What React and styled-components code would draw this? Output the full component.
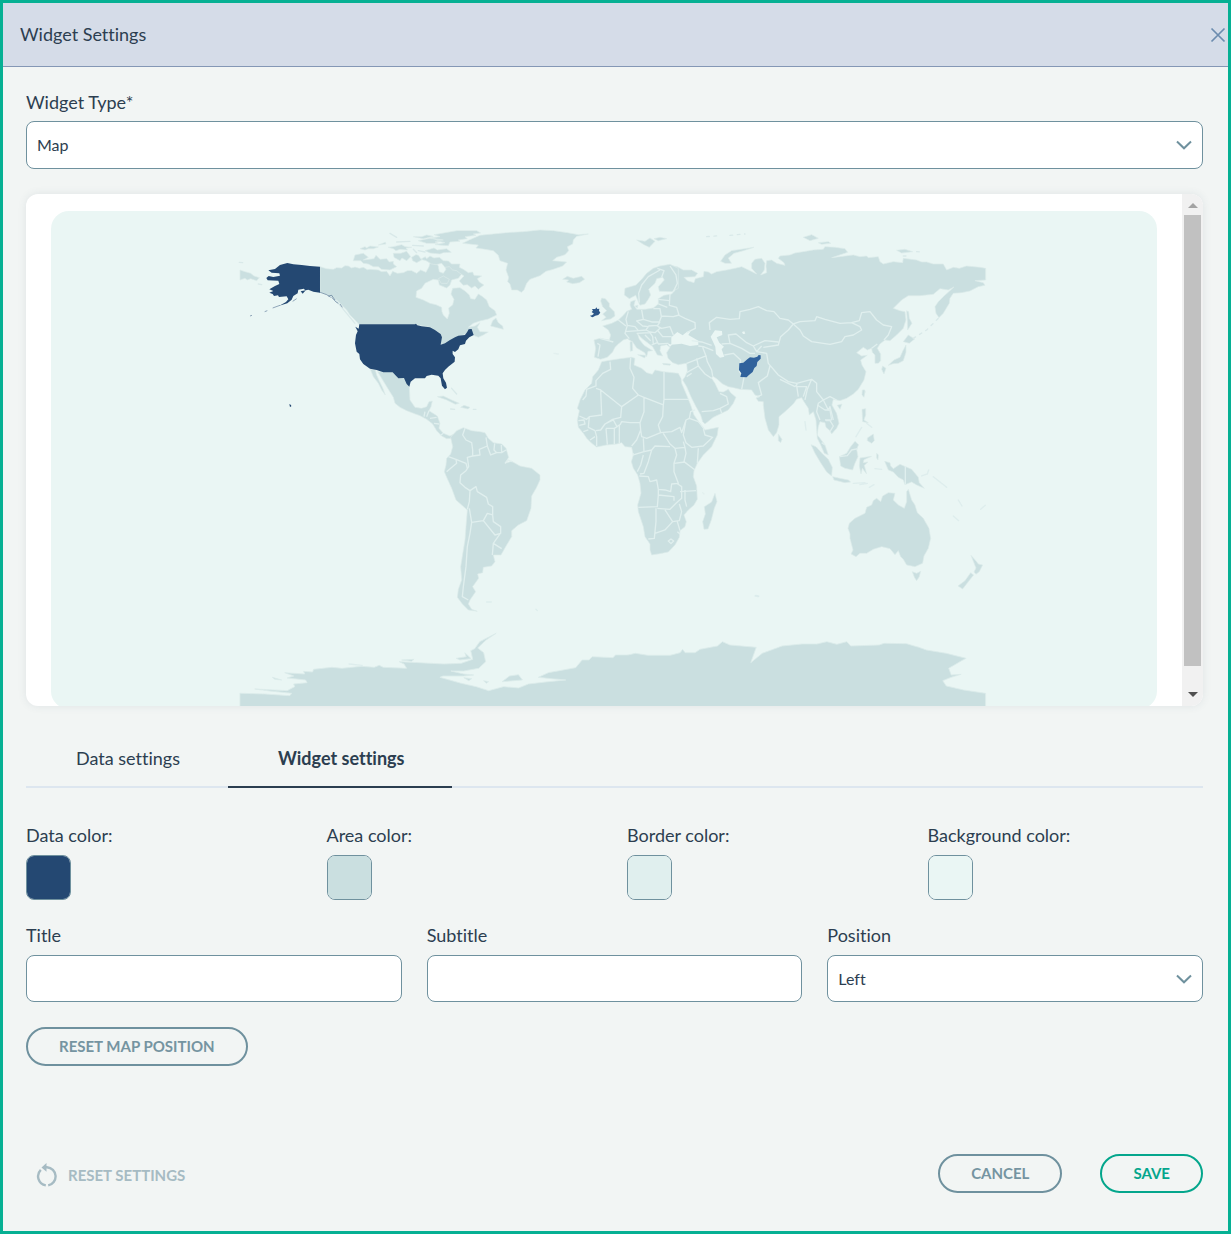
import React, { useState } from 'react';
import styled, { createGlobalStyle } from 'styled-components';

const GlobalStyle = createGlobalStyle`
  * {
    box-sizing: border-box;
  }

  body {
    margin: 0;
    font-family: Lato, "Open Sans", sans-serif;
    font-size: 18px;
    font-variant-ligatures: none;
    line-height: 24px;
    color: #2c3e50;
  }

  button, input, select {
    font-family: inherit;
    font-variant-ligatures: inherit;
    color: inherit;
  }
`;

const Dialog = styled.section`
  display: flex;
  flex-direction: column;
  min-height: 100vh;
  border: 3px solid #06b093;
  background: #f2f5f4;
`;

const Header = styled.header`
  display: flex;
  align-items: center;
  justify-content: space-between;
  height: 64px;
  padding: 0 2px 0 17px;
  background: #d5dce8;
  border-bottom: 1px solid #8497b5;
`;

const Heading = styled.h1`
  margin: 0;
  padding-bottom: 2px;
  font-size: 18px;
  font-weight: 400;
`;

const CloseButton = styled.button`
  display: flex;
  padding: 0;
  border: none;
  background: none;
  color: #6c8cae;
  cursor: pointer;
`;

const Body = styled.form`
  display: flex;
  flex: 1;
  flex-direction: column;
  padding: 24px 25px 38px 23px;
`;

const Field = styled.div`
  display: flex;
  flex-direction: column;
  gap: ${props => props.$gap || 8}px;
`;

const Label = styled.label`
  display: block;
  line-height: 22px;
`;

const TextInput = styled.input`
  width: 100%;
  height: 47px;
  padding: 0 10px;
  border: 1px solid #6f919e;
  border-radius: 8px;
  background: #fff;
  font-size: 16px;
`;

const SelectWrap = styled.div`
  position: relative;
`;

const SelectBox = styled.select`
  display: block;
  width: 100%;
  height: ${props => props.$height}px;
  padding: 0 40px 1px 10px;
  border: 1px solid #6f919e;
  border-radius: 8px;
  background: #fff;
  font-size: 16px;
  appearance: none;
`;

const Chevron = styled.svg`
  position: absolute;
  top: 50%;
  right: 11px;
  margin-top: -5px;
  pointer-events: none;
`;

const Preview = styled.div`
  display: flex;
  height: 512px;
  margin: 25px 0;
  border-radius: 12px;
  background: #fff;
  box-shadow: 0 0 8px rgba(60, 80, 100, 0.1);
  overflow: hidden;
`;

const PreviewContent = styled.div`
  flex: 1;
  min-width: 0;
  padding: 17px 25px 0;
  overflow: hidden;
`;

const MapPanel = styled.div`
  height: 498px;
  border-radius: 18px;
  background: #eaf6f4;
  overflow: hidden;
`;

const MapSvg = styled.svg`
  display: block;
  width: 100%;
  height: 498px;
`;

const ScrollTrack = styled.div`
  display: flex;
  flex-direction: column;
  align-items: center;
  width: 21px;
  background: #f1f1f1;
`;

const ScrollArrow = styled.div`
  width: 0;
  height: 0;
  margin: ${props => (props.$down ? '26px 0 0' : '9px 0 7px')};
  border-left: 5px solid transparent;
  border-right: 5px solid transparent;
  border-${props => (props.$down ? 'top' : 'bottom')}: 5px solid ${props => (props.$down ? '#505050' : '#a3a3a3')};
`;

const ScrollThumb = styled.div`
  width: 17px;
  height: 451px;
  background: #c1c1c1;
`;

const Tabs = styled.div`
  display: flex;
  height: 57px;
  border-bottom: 2px solid #dde6ef;
`;

const Tab = styled.button`
  height: 57px;
  padding: 0 48px 2px 50px;
  border: none;
  border-bottom: 2px solid ${props => (props.$active ? '#2c3e50' : 'transparent')};
  background: none;
  font-size: 18px;
  font-weight: ${props => (props.$active ? 700 : 400)};
  cursor: pointer;
`;

const Columns = styled.div`
  display: grid;
  grid-template-columns: repeat(${props => props.$count}, 1fr);
  column-gap: 25px;
  margin-top: ${props => props.$top}px;
`;

const Swatch = styled.input`
  width: 45px;
  height: 45px;
  padding: 0;
  border: 1px solid #6f919e;
  border-radius: 8px;
  background: none;
  overflow: hidden;
  cursor: pointer;

  &::-webkit-color-swatch-wrapper {
    padding: 0;
  }

  &::-webkit-color-swatch {
    border: none;
  }
`;

const PillButton = styled.button`
  align-self: flex-start;
  height: 39px;
  padding: 0 31px 2px;
  border: 2px solid ${props => (props.$primary ? '#04a68c' : '#6f919e')};
  border-radius: 20px;
  background: none;
  color: ${props => (props.$primary ? '#04a68c' : '#7594a1')};
  font-size: 15px;
  font-weight: 700;
  cursor: pointer;
`;

const Footer = styled.footer`
  display: flex;
  align-items: center;
  gap: 38px;
  margin-top: auto;
`;

const ResetButton = styled.button`
  display: flex;
  align-items: center;
  gap: 10px;
  margin-right: auto;
  padding: 2px 0 0 10px;
  border: none;
  background: none;
  color: #a6bbc3;
  font-size: 15px;
  font-weight: 700;
  cursor: pointer;
`;

const Land = styled.path`
  fill: #cadfe0;
  stroke: #dcecea;
  stroke-width: 2;
`;

const Islands = styled.path`
  fill: none;
  stroke: #d9e9e9;
  stroke-width: 4;
  stroke-linecap: round;
`;

const Borders = styled.path`
  fill: none;
  stroke: #e0efee;
  stroke-width: 4;
  stroke-linejoin: round;
`;

const Water = styled.path`
  fill: #eaf6f4;
`;

const Data = styled.path`
  fill: ${props => props.$color || '#244872'};
`;

const DataLine = styled.path`
  fill: none;
  stroke: #244872;
  stroke-width: 2;
  opacity: 0.7;
`;

const WorldMap = () => (
  <MapSvg viewBox="51 211 1106 498" preserveAspectRatio="xMidYMin meet" role="img" aria-label="World map">
    <g transform="translate(230 220) scale(0.3333)">
      <Land d="M270 140 290 146 310 148 320 143 335 144 345 137 355 138 365 144 375 141 388 145 400 142 412 149 420 148 445 150 455 155 470 154 480 168 488 154 502 160 520 158 532 152 545 152 560 160 572 150 588 157 597 140 603 118 615 122 625 138 628 155 640 160 648 148 643 138 660 136 672 145 688 148 697 160 685 175 665 180 660 195 650 204 628 195 625 180 610 178 585 190 575 205 560 213 558 232 580 240 600 250 618 254 635 262 636 275 640 285 652 297 658 280 656 264 668 255 672 238 663 222 668 205 690 203 705 213 718 225 722 236 735 238 745 222 755 228 770 240 778 260 795 272 800 285 775 297 750 303 730 310 715 322 735 318 750 308 742 322 750 335 775 336 760 345 745 352 728 345 720 335 660 365 632 375 630 340 600 322 558 314 388 314 375 300 360 285 350 270 335 255 320 240 300 228 270 216Z" />
      <Land d="M443 455 488 455 505 473 520 470 538 498 540 540 555 562 575 565 590 560 597 545 607 543 603 560 597 572 622 588 630 610 627 625 640 640 660 648 678 640 672 655 650 656 635 648 620 632 608 612 590 598 570 587 550 580 530 572 510 562 495 550 490 532 475 508 458 480Z" />
      <Land d="M421 448 430 470 445 490 455 510 466 525 458 503 448 483 440 465 436 450Z" />
      <Land d="M30 150 45 155 62 160 72 168 88 173 80 182 62 176 52 180 45 175 30 180Z" />
      <Land d="M375 105 400 100 415 112 400 120 432 116 438 106 450 118 470 116 478 126 490 124 490 132 500 140 480 150 455 148 445 140 430 140 415 132 400 130 392 122 370 122Z" />
      <Land d="M572 118 586 110 590 116 600 108 612 114 628 112 640 122 655 123 665 132 690 132 688 142 700 148 715 158 728 156 732 166 755 168 742 176 748 186 762 195 745 208 735 198 725 204 712 194 700 196 688 183 702 168 690 160 680 152 668 150 658 140 645 142 635 130 618 134 605 132 588 122Z" />
      <Land d="M490 100 512 100 530 94 542 110 530 122 516 114 510 122 492 112Z M545 112 558 104 565 106 575 120 560 128 548 122Z M390 86 405 80 410 84 420 78 445 81 430 86 415 86 405 90Z M445 75 466 67 468 72Z M475 82 490 80 515 74 525 80 545 82 528 84 532 90 510 88 498 92 490 86Z M565 62 600 55 640 62 615 66 625 70 590 70Z" />
      <Land d="M612 44 680 32 740 32 752 39 730 42 738 46 705 50 712 56 685 60 690 64 660 66 655 77 615 74 645 68 620 62 640 60 600 54 630 50Z M585 92 612 84 622 90 650 86 664 97 640 98 630 102 600 99Z M550 50 575 50 590 45 610 49 590 54 580 56Z" />
      <Land d="M625 176 640 168 658 178 652 190 634 190Z M782 318 788 302 798 294 805 308 818 318 820 328 805 324Z M622 530 640 528 665 540 688 550 676 553 650 540Z M692 562 702 556 720 562 714 567Z" />
      <Islands d="M28 127 38 128 M85 192 95 194 M662 567 674 568 M730 568 738 568 M665 505 680 522 M310 232 375 310 M480 40 500 52 M500 66 540 64 M548 76 580 78 M565 92 585 96 M550 88 560 98" />
      <Borders d="M585 575 582 590 M597 572 590 590 M600 595 620 592 M628 612 612 610 M640 640 632 646" />
      <Data d="M388 313 555 313 558 311 562 316 575 319 600 322 615 330 632 342 636 352 632 374 645 370 660 360 675 352 685 347 705 345 712 335 716 328 725 327 731 345 718 352 708 362 705 372 690 376 685 388 675 396 668 392 668 402 675 412 674 425 655 440 645 450 638 460 640 475 648 488 651 503 645 508 636 497 632 475 625 467 605 464 590 468 585 475 555 475 542 485 538 500 530 492 522 474 505 475 488 457 460 457 440 450 420 446 400 432 390 418 388 402 380 395 375 370 378 345 383 334 376 320 386 326Z" />
      <Data d="M270 140 240 138 215 135 190 133 172 129 150 135 135 147 115 151 125 158 148 160 150 167 130 171 116 168 109 174 113 181 145 182 148 192 135 198 118 208 130 213 118 218 128 222 132 228 144 226 147 231 170 229 175 238 168 246 148 257 172 250 185 239 190 228 203 220 205 209 222 206 226 212 218 221 212 214 235 209 250 215 270 218Z" />
      <DataLine d="M150 256 128 264 M112 272 104 275 M188 244 200 236 M268 216 290 224 302 232 M295 228 305 226 315 240 M305 232 318 246 325 250 M330 252 337 262" />
      <DataLine opacity="0.4" d="M66 286 60 288" />
      <Data d="M178 552 183 555 184 559 180 561Z" />
    </g>

    <g transform="translate(430 220) scale(0.3333)">
      <Land d="M98 70 118 60 150 46 190 42 230 38 280 35 330 30 370 32 412 38 445 44 475 42 440 49 430 60 428 72 412 80 416 92 405 104 380 112 368 122 388 124 410 126 398 138 370 148 348 154 330 167 300 178 290 190 282 210 274 217 262 210 245 210 240 192 233 185 236 172 228 150 233 130 210 122 205 106 190 92 165 88 138 84 145 75Z" />
      <Land d="M398 178 412 169 430 175 455 169 464 178 448 188 428 191 410 186 416 180Z" />
      <Islands opacity="0.5" d="M372 400 385 402" />
      <Data $color="#2c5688" d="M480 287 486 286 492 281 485 276 489 272 486 267 496 267 499 262 502 267 508 266 507 272 511 278 505 285 496 287 488 292 484 290Z" />
    </g>

    <g transform="translate(570 220) scale(0.3333)">
      <Land d="M300 137 322 140 340 150 365 150 383 160 375 170 342 172 352 182 372 188 376 176 400 170 402 154 415 156 425 162 440 155 470 150 495 145 515 140 540 152 560 162 545 145 545 130 555 118 575 115 585 130 583 150 572 165 590 158 588 138 590 122 605 120 620 130 645 136 642 128 625 115 630 108 660 105 675 99 700 95 730 90 760 88 765 80 795 82 825 86 833 97 785 113 850 105 870 110 890 108 895 113 925 110 930 125 940 132 970 125 998 128 1000 115 1040 120 1055 126 1070 126 1090 132 1120 132 1130 150 1150 142 1168 145 1190 138 1230 142 1247 145 1247 180 1215 182 1240 188 1245 196 1225 200 1200 213 1175 218 1150 220 1140 235 1138 250 1120 280 1107 293 1098 280 1095 260 1105 245 1120 230 1152 201 1135 210 1110 206 1090 223 1050 227 1015 227 995 240 970 265 990 272 1005 275 1008 300 1000 325 980 345 960 362 945 360 930 372 922 385 932 402 932 422 925 430 915 430 915 405 907 397 905 385 892 390 880 382 860 398 875 408 892 406 872 420 876 435 888 455 882 480 865 508 850 522 830 535 810 542 790 538 786 555 800 580 807 610 800 625 785 642 780 632 768 622 765 608 750 605 745 620 742 645 750 655 765 675 775 705 763 700 752 675 742 655 740 630 738 600 730 575 718 585 715 565 702 545 695 533 680 538 670 552 645 575 627 590 627 615 620 638 610 650 595 630 585 595 580 555 580 545 565 544 558 534 570 530 555 525 545 510 510 508 490 503 475 500 458 492 442 478 428 468 425 475 435 490 447 515 460 516 475 508 482 518 498 532 490 550 475 570 455 580 430 592 405 612 398 605 392 585 378 560 365 535 350 500 338 480 345 470 352 455 350 430 325 434 308 428 294 415 290 398 300 382 290 374 272 378 270 392 278 408 262 405 248 380 235 370 215 355 203 342 208 358 222 376 248 392 234 394 230 410 224 398 200 384 188 366 172 356 160 360 145 372 135 382 128 396 112 412 92 418 73 412 77 385 72 360 90 355 118 360 122 345 115 330 98 318 125 310 145 300 160 286 170 274 185 268 180 255 182 245 196 240 192 256 200 268 225 268 250 264 265 252 265 236 282 226 305 222 320 205 305 180Z" />
      <Land d="M270 138 250 145 230 160 215 178 198 195 165 205 163 225 178 236 197 226 205 245 210 256 225 252 235 238 242 225 236 208 255 190 260 176 278 172 283 180 265 200 268 214 305 215 325 205 325 145 300 133Z" />
      <Land d="M92 243 95 234 106 236 118 250 118 260 133 275 135 288 122 297 95 302 108 292 98 282 110 272 98 260Z M200 60 225 64 240 54 255 64 238 82 222 74Z M252 56 270 52 290 56 265 62Z" />
      <Land d="M452 124 465 105 485 92 552 82 520 92 492 100 475 114 484 130 465 130Z M180 366 187 364 188 392 181 394Z M203 404 228 406 224 414Z M278 430 302 432 300 436 280 434Z M195 258 204 256 202 264Z" />
      <Land d="M700 52 725 44 745 55 720 62Z M745 68 775 65 782 70 755 73Z M980 91 1005 88 1028 95 995 99Z M1010 272 1016 275 1018 295 1026 310 1013 330 1012 300Z M1015 345 1034 357 1018 370 1000 365Z M1008 375 1008 397 1000 422 985 430 970 431 955 436 972 420 990 412 998 394Z M938 438 948 445 942 462 935 448Z M880 510 886 515 880 530Z M802 556 816 552 810 568Z" />
      <Land d="M625 642 636 658 632 668 625 662Z" />
      <Islands strokeDasharray="8 14" d="M1030 355 1070 330 1107 293 M410 50 450 47 M480 46 525 42 M1000 108 1015 108 M1040 95 1058 96" />
      <Water d="M422 350 435 331 456 333 457 345 440 352 448 368 462 380 455 388 463 410 450 413 438 402 436 380Z M304 352 322 336 338 346 350 336 362 334 355 345 385 362 385 375 360 378 335 371 304 374Z M516 336 523 334 526 341 519 342Z M292 370 306 374 300 380Z" />
      <Borders d="M208 248 206 220 215 195 235 170 270 150 M275 172 282 152 262 145 M300 138 318 165 322 190 310 215 M265 238 298 242 M265 252 292 262 M300 222 298 256 320 262 327 285 310 290 272 288 M215 270 220 298 245 306 268 306 274 290 270 266 250 266 M270 306 262 318 275 325 300 320 310 345 M325 285 345 295 375 308 376 325 350 338 M175 274 168 298 172 316 195 320 205 332 228 330 235 320 218 318 200 303 220 298 M145 300 168 318 M172 316 165 340 178 356 M90 355 130 366 M82 370 90 375 84 410 M165 335 205 332 M235 318 262 316 270 325 255 338 240 336 228 330 M200 340 240 338 248 350 250 372 M262 330 278 350 305 350 M255 350 265 372 295 370 M245 375 262 368 M225 345 242 362" />
      <Borders d="M420 330 418 308 440 292 480 298 508 296 510 275 540 268 565 260 590 272 612 275 630 295 655 300 670 312 690 305 735 302 740 290 765 298 810 310 845 308 870 320 875 330 850 345 825 350 815 365 780 373 725 365 700 348 690 330 670 312 655 330 632 350 625 375 580 382 M845 308 868 302 875 278 900 275 920 300 940 315 965 320 955 345 942 360 M455 372 480 370 475 345 498 342 530 368 550 378 585 362 625 366 M480 370 515 385 540 400 555 400 M463 405 490 400 512 420 508 455 522 472 515 508 M550 378 560 395 575 378 M560 395 590 400 595 430 625 465 655 485 680 490 725 478 740 490 740 515 760 540 780 530 800 540 M600 438 592 468 565 488 575 525 562 530 M630 478 675 500 682 492 M680 497 685 530 M680 500 710 500 700 530 M725 478 712 508 705 540 M760 540 745 550 740 575 750 600 M760 540 775 570 780 560 790 600 M765 600 785 600 M905 385 922 372" />
      <Borders d="M365 362 395 366 425 376 M385 378 400 380 430 392 M398 382 408 408 350 430 M408 408 412 425 425 450 428 468 M380 415 385 438 350 458 M385 438 405 462 425 475 M350 470 365 460 M395 575 430 572 450 565 455 580 M450 565 475 552 470 530 450 520" />
      <Data $color="#30629c" d="M508 430 520 428 532 418 540 412 552 413 562 410 566 405 572 406 572 416 562 426 560 438 553 444 548 456 536 466 530 472 511 471 514 460 507 450Z" />
    </g>

    <g transform="translate(570 340) scale(0.3333)">
      <Land d="M95 65 112 62 150 56 185 52 195 55 192 75 215 85 230 98 247 103 255 90 280 95 325 100 333 115 335 130 350 165 362 195 372 225 395 258 405 270 445 262 442 285 425 320 400 345 382 370 372 392 370 410 380 438 382 478 372 495 355 510 342 525 349 545 345 560 330 572 328 592 315 615 295 636 270 641 245 645 240 630 240 612 225 590 220 560 205 515 203 495 213 460 210 430 203 405 190 385 184 365 190 345 185 322 165 320 155 308 140 312 110 315 80 321 65 310 50 295 40 280 25 262 22 240 28 212 22 205 30 180 45 150 65 130 68 110 85 90Z" />
      <Land d="M435 460 441 485 433 505 424 540 414 567 402 568 398 545 406 522 403 500 425 486Z" />
      <Borders d="M120 65 122 88 98 100 78 122 78 138 50 148 48 168 38 180 M78 145 92 150 95 225 58 230 50 238 28 228 M92 150 155 200 205 165 188 145 192 112 180 85 182 54 M205 165 222 172 280 195 282 178 282 95 M282 178 358 178 M222 172 222 215 210 248 180 248 155 245 150 255 M155 200 152 232 128 238 105 252 92 270 78 272 M280 195 278 230 265 255 272 278 230 295 215 290 212 270 210 248 M58 230 55 262 75 272 80 290 80 318 M40 275 55 270 M60 300 75 290 M108 265 112 314 M133 265 133 312 M108 265 133 265 148 255 148 310 M105 252 130 240 142 262 M25 242 42 240 45 252 28 256 M212 270 200 300 185 318 M220 295 222 335 190 345 190 340" />
      <Borders d="M272 278 305 275 330 262 335 278 348 240 358 235 362 215 375 210 M358 235 385 245 402 266 M348 240 340 285 348 308 365 322 400 318 428 292 405 285 400 266 M280 280 300 312 315 325 345 322 340 305 M345 322 348 340 342 365 375 390 M385 325 382 370 M222 335 245 330 255 318 300 320 M315 325 320 345 312 370 345 366 M312 370 312 395 325 430 305 432 302 455 285 450 265 448 260 420 240 425 235 410 208 408 M245 330 235 365 222 400 210 402 M220 345 212 375 202 395 M265 448 265 465 262 500 205 502 M262 505 300 508 318 490 335 475 335 440 320 430 M265 465 312 470 312 482 M258 505 258 545 253 595 235 597 M255 580 285 570 308 545 328 542 335 515 328 492 M285 510 308 545 M345 450 345 480 350 500 M330 455 378 452 M322 545 330 572 M322 575 330 582 M295 603 303 597 311 603 303 611Z" />
      <Islands d="M398 458 402 462" opacity="0.4" />
    </g>

    <g transform="translate(430 400) scale(0.3333)">
      <Land d="M62 112 80 92 100 83 125 92 150 95 165 98 175 115 190 128 215 132 228 145 236 172 225 190 245 184 270 198 305 205 330 225 330 240 320 262 305 288 303 325 290 362 265 375 245 392 245 410 230 435 213 465 190 465 195 485 185 498 160 502 158 518 143 522 146 535 128 560 137 575 120 600 115 612 125 628 142 634 115 630 97 612 82 592 85 568 95 540 92 500 100 450 105 420 108 380 112 330 95 315 78 300 65 265 50 232 43 215 48 195 50 175 62 162 68 140Z" />
      <Borders d="M105 85 98 105 108 120 125 128 128 150 128 168 112 172 116 200 108 212 92 225 90 248 105 262 120 272 118 305 112 328 M128 168 150 165 148 148 172 138 168 112 M172 138 182 165 200 158 192 150 194 130 M200 158 215 158 214 135 M215 158 228 150 M55 170 78 178 80 190 62 205 50 215 M78 178 108 190 112 205 M120 272 138 260 142 275 170 292 175 312 188 320 188 345 172 340 160 362 125 367 118 325 M160 362 195 405 212 400 212 380 190 365 188 345 M125 367 120 400 112 440 108 500 100 560 97 590 115 600 M210 402 190 430 215 446 M190 430 187 465 M225 190 235 180 248 186" />
      <Islands d="M170 606 184 606 M318 628 322 632" opacity="0.7" />
    </g>

    <g transform="translate(730 390) scale(0.3333)">
      <Land d="M358 400 375 385 405 370 410 352 425 345 430 332 440 325 452 335 458 318 475 308 495 310 490 330 505 345 523 355 530 335 530 305 535 298 545 330 555 345 562 368 580 385 597 415 602 445 595 475 582 498 578 520 555 530 530 525 520 508 512 500 505 482 495 494 480 476 455 470 430 478 410 490 390 490 378 500 363 492 369 480 360 445 360 432 354 415Z" />
      <Land d="M547 545 560 550 572 544 568 560 560 572 553 562Z M723 496 740 515 745 522 758 525 748 545 738 553 732 546 738 534Z M722 548 731 555 715 575 698 597 684 588 705 572Z" />
      <Land d="M243 164 258 170 278 192 295 208 307 232 305 258 290 246 270 215 255 190Z M308 260 330 265 355 270 362 276 345 278 312 270Z M328 200 350 190 362 170 375 154 386 164 380 178 384 200 374 222 368 240 345 235 332 228Z M390 204 425 199 402 209 400 218 414 216 403 226 410 252 397 235 393 252 388 228Z" />
      <Land d="M464 214 480 218 482 228 490 236 510 223 545 238 565 262 568 278 583 295 560 285 545 276 525 284 520 270 505 262 490 246 475 240Z M396 58 407 56 407 75 402 90 415 98 398 95Z M412 144 430 132 433 152 425 160 412 152Z M397 0 405 0 402 22 396 14Z M440 190 445 195 444 210 440 204Z" />
      <Islands d="M370 280 405 278 M390 284 412 280 M418 292 432 284 M435 236 455 238 M575 258 592 252 596 240 M610 260 650 292 M670 378 686 392 M752 358 766 346 M685 330 696 348 M410 100 425 112 M378 140 395 112 M225 95 228 120 M77 616 86 618" opacity="0.7" />
      <Borders d="M526 228 526 284 M330 200 352 197 365 180 384 176 M288 92 300 92 310 108 300 125 M262 45 285 60 300 60 305 90 M275 158 285 165" />
    </g>

    <g transform="translate(230 590) scale(0.4974 0.3333)">
      <Land d="M20 310 70 312 120 317 124 310 80 303 50 297 115 302 130 290 128 282 155 278 152 270 115 264 128 258 110 248 150 252 148 244 166 246 168 238 205 232 225 235 265 229 290 232 300 226 308 232 355 235 350 222 340 215 380 218 430 222 465 220 488 208 484 182 492 176 502 155 535 130 515 150 498 174 510 188 514 215 500 235 470 243 444 243 470 252 490 255 470 258 428 258 422 262 465 280 495 290 520 302 550 290 580 294 600 282 640 275 675 270 645 266 620 262 640 248 695 233 708 210 722 210 728 200 770 203 775 195 800 195 815 190 840 196 885 196 905 188 910 178 915 188 935 188 945 178 980 168 990 155 1005 165 1058 172 1047 218 1070 190 1110 168 1150 162 1180 162 1200 155 1220 163 1240 155 1248 168 1305 165 1315 160 1360 161 1385 172 1400 180 1440 190 1480 205 1470 213 1445 235 1450 255 1470 253 1450 262 1433 272 1440 288 1475 300 1519 310 1519 360 20 360Z" />
      <Land d="M547 275 562 258 580 254 588 270Z M85 262 104 270 90 268Z M455 205 475 200 472 188 485 206 462 210Z M345 210 370 208 365 214Z M470 263 486 266 480 272Z M510 272 520 275 515 280Z" />
      <Islands d="M1056 18 1062 20 M240 222 265 226" opacity="0.7" />
    </g>
  </MapSvg>
);

const SelectField = ({ id, height, value, onChange, options }) => (
  <SelectWrap>
    <SelectBox id={id} $height={height} value={value} onChange={e => onChange(e.target.value)}>
      {options.map(option => (
        <option key={option}>{option}</option>
      ))}
    </SelectBox>
    <Chevron width="16" height="10" viewBox="0 0 16 10" fill="none" stroke="#6f919e" strokeWidth="2">
      <path d="M1 1.5 8 8.3 15 1.5" />
    </Chevron>
  </SelectWrap>
);

const App = () => {
  const [type, setType] = useState('Map');
  const [tab, setTab] = useState('Widget settings');
  const [title, setTitle] = useState('');
  const [subtitle, setSubtitle] = useState('');
  const [position, setPosition] = useState('Left');
  const [colors, setColors] = useState([
    { id: 'data', label: 'Data color:', value: '#244872' },
    { id: 'area', label: 'Area color:', value: '#cadfe0' },
    { id: 'border', label: 'Border color:', value: '#e0efee' },
    { id: 'background', label: 'Background color:', value: '#eaf6f4' },
  ]);

  const changeColor = (id, value) => {
    setColors(colors.map(color => (color.id === id ? { ...color, value } : color)));
  };

  return (
    <Dialog>
      <GlobalStyle />
      <Header>
        <Heading>Widget Settings</Heading>
        <CloseButton type="button" aria-label="Close">
          <svg width="16" height="16" viewBox="0 0 16 16" fill="none" stroke="currentColor" strokeWidth="1.7">
            <path d="M1.5 1.5 14.5 14.5 M14.5 1.5 1.5 14.5" />
          </svg>
        </CloseButton>
      </Header>
      <Body onSubmit={e => e.preventDefault()}>
        <Field>
          <Label htmlFor="type">Widget Type*</Label>
          <SelectField id="type" height={48} value={type} onChange={setType} options={['Map', 'Chart', 'Table']} />
        </Field>

        <Preview>
          <PreviewContent>
            <MapPanel>
              <WorldMap />
            </MapPanel>
          </PreviewContent>
          <ScrollTrack>
            <ScrollArrow />
            <ScrollThumb />
            <ScrollArrow $down />
          </ScrollTrack>
        </Preview>

        <Tabs role="tablist">
          {['Data settings', 'Widget settings'].map(name => (
            <Tab
              key={name}
              type="button"
              role="tab"
              aria-selected={tab === name}
              $active={tab === name}
              onClick={() => setTab(name)}
            >
              {name}
            </Tab>
          ))}
        </Tabs>

        <Columns $count={4} $top={36}>
          {colors.map(color => (
            <Field key={color.id} $gap={9}>
              <Label htmlFor={color.id}>{color.label}</Label>
              <Swatch
                id={color.id}
                type="color"
                value={color.value}
                onChange={e => changeColor(color.id, e.target.value)}
              />
            </Field>
          ))}
        </Columns>

        <Columns $count={3} $top={24}>
          <Field $gap={9}>
            <Label htmlFor="title">Title</Label>
            <TextInput id="title" type="text" value={title} onChange={e => setTitle(e.target.value)} />
          </Field>
          <Field $gap={9}>
            <Label htmlFor="subtitle">Subtitle</Label>
            <TextInput id="subtitle" type="text" value={subtitle} onChange={e => setSubtitle(e.target.value)} />
          </Field>
          <Field $gap={9}>
            <Label htmlFor="position">Position</Label>
            <SelectField
              id="position"
              height={47}
              value={position}
              onChange={setPosition}
              options={['Left', 'Center', 'Right']}
            />
          </Field>
        </Columns>

        <Columns $count={1} $top={25}>
          <div>
            <PillButton type="button">RESET MAP POSITION</PillButton>
          </div>
        </Columns>

        <Footer>
          <ResetButton type="button">
            <svg width="22" height="24" viewBox="0 0 22 24" fill="none" stroke="currentColor" strokeWidth="2.4">
              <path d="M4.8 6.8A9.2 9.2 0 0 0 9.8 22.4 M12.2 22.4A9.2 9.2 0 0 0 11 4.2H8" />
              <path d="M10.5 0 5.5 4.4 10.5 8.8Z" fill="currentColor" stroke="none" />
            </svg>
            RESET SETTINGS
          </ResetButton>
          <PillButton type="button">CANCEL</PillButton>
          <PillButton type="submit" $primary>SAVE</PillButton>
        </Footer>
      </Body>
    </Dialog>
  );
};

export default App;
